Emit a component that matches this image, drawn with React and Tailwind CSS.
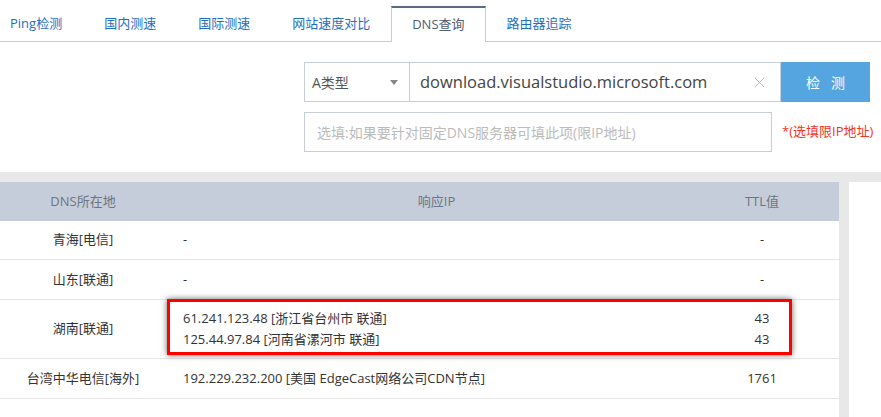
import { X } from "lucide-react";

const tabs = ["Ping检测", "国内测速", "国际测速", "网站速度对比", "DNS查询", "路由器追踪"];

const rows = [
  { loc: "青海[电信]", ips: ["-"], ttl: ["-"], h: "h-[39px]" },
  { loc: "山东[联通]", ips: ["-"], ttl: ["-"], h: "h-[40px]" },
  {
    loc: "湖南[联通]",
    ips: ["61.241.123.48 [浙江省台州市 联通]", "125.44.97.84 [河南省漯河市 联通]"],
    ttl: ["43", "43"],
    h: "h-[59px]"
  },
  { loc: "台湾中华电信[海外]", ips: ["192.229.232.200 [美国 EdgeCast网络公司CDN节点]"], ttl: ["1761"], h: "h-[40px]" }
];

export default function App() {
  return (
    <div className="w-[881px] h-[417px] overflow-hidden bg-white font-['Open_Sans','Noto_Sans_CJK_SC',sans-serif] text-[13px]">
      {/* tabs */}
      <div className="flex h-[42px] items-end border-b border-[#c8ced8]">
        {tabs.map((t, i) => {
          const active = t === "DNS查询";
          return (
            <div
              key={t}
              className={
                active
                  ? "relative -mb-px flex h-[36px] items-center border-x border-t-2 border-[#c8ced8] border-t-[#5b6a80] bg-white px-[20px] text-[#4f5d6e]"
                  : i === 0
                  ? "flex h-[35px] items-center pl-[10px] pr-[21px] text-[#1f6fc0]"
                  : "flex h-[35px] items-center px-[21px] text-[#1f6fc0]"
              }
            >
              {t}
            </div>
          );
        })}
      </div>

      {/* form */}
      <div className="flex h-[130px] flex-col items-end gap-[10px] pr-[11px] pt-[20px]">
        <div className="flex h-[40px] w-[566px]">
          <div className="flex w-[106px] items-center justify-between border border-[#c8ced8] pl-[7px] pr-[11px] text-[14px] text-[#555]">
            <span>A类型</span>
            <span className="h-0 w-0 border-x-[4px] border-t-[5px] border-x-transparent border-t-[#888]" />
          </div>
          <div className="flex flex-1 items-center border-y border-r border-[#c8ced8] pl-[10px] pr-[12px]">
            <span className="flex-1 text-[16.5px] text-[#444]">download.visualstudio.microsoft.com</span>
            <X size={17} strokeWidth={1.1} className="text-[#aaa]" />
          </div>
          <div className="flex w-[89px] items-center justify-center bg-[#55a6e0] text-[14px] text-white">
            检&nbsp;&nbsp;&nbsp;测
          </div>
        </div>
        <div className="mr-[-2px] flex h-[40px] w-[568px] items-center gap-[10px]">
          <div className="flex h-full w-[468px] shrink-0 items-center border border-[#c8ced8] px-[12px] text-[14px] text-[#bbb]">
            选填:如果要针对固定DNS服务器可填此项(限IP地址)
          </div>
          <span className="whitespace-nowrap text-[13px] text-[#f5331f]">*(选填限IP地址)</span>
        </div>
      </div>

      {/* table */}
      <div className="flex h-[245px] bg-[#e8e8e8] pt-[10px]">
        <div className="relative w-[839px] bg-white text-[#333]">
          <div className="grid h-[39px] grid-cols-[166px_1fr_154px] items-center bg-[#c6cdda] text-[#6b7585]">
            <div className="text-center">DNS所在地</div>
            <div className="pl-[22px] text-center">响应IP</div>
            <div className="text-center">TTL值</div>
          </div>
          {rows.map((r) => (
            <div
              key={r.loc}
              className={`grid ${r.h} grid-cols-[166px_1fr_154px] items-center border-b border-[#e6e6e6]`}
            >
              <div className="text-center">{r.loc}</div>
              <div className="flex flex-col gap-[2px] pl-[17px]">
                {r.ips.map((ip) => (
                  <span key={ip}>{ip}</span>
                ))}
              </div>
              <div className="flex flex-col gap-[2px] items-center">
                {r.ttl.map((v, i) => (
                  <span key={i}>{v}</span>
                ))}
              </div>
            </div>
          ))}
          {/* annotation box */}
          <div className="absolute left-[167px] top-[117px] h-[56px] w-[625px] border-[3px] border-[#f00] shadow-[0_0_6px_rgba(0,0,0,0.6)]" />
        </div>
        <div className="ml-[10px] flex-1 bg-white" />
      </div>
    </div>
  );
}
